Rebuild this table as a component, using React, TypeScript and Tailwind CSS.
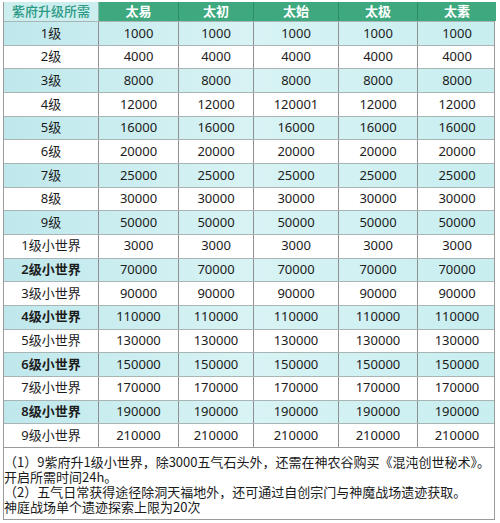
import React from "react";

const cols = ["太易", "太初", "太始", "太极", "太素"];

const rows: [string, string[]][] = [
  ["1级", ["1000", "1000", "1000", "1000", "1000"]],
  ["2级", ["4000", "4000", "4000", "4000", "4000"]],
  ["3级", ["8000", "8000", "8000", "8000", "8000"]],
  ["4级", ["12000", "12000", "120001", "12000", "12000"]],
  ["5级", ["16000", "16000", "16000", "16000", "16000"]],
  ["6级", ["20000", "20000", "20000", "20000", "20000"]],
  ["7级", ["25000", "25000", "25000", "25000", "25000"]],
  ["8级", ["30000", "30000", "30000", "30000", "30000"]],
  ["9级", ["50000", "50000", "50000", "50000", "50000"]],
  ["1级小世界", ["3000", "3000", "3000", "3000", "3000"]],
  ["2级小世界", ["70000", "70000", "70000", "70000", "70000"]],
  ["3级小世界", ["90000", "90000", "90000", "90000", "90000"]],
  ["4级小世界", ["110000", "110000", "110000", "110000", "110000"]],
  ["5级小世界", ["130000", "130000", "130000", "130000", "130000"]],
  ["6级小世界", ["150000", "150000", "150000", "150000", "150000"]],
  ["7级小世界", ["170000", "170000", "170000", "170000", "170000"]],
  ["8级小世界", ["190000", "190000", "190000", "190000", "190000"]],
  ["9级小世界", ["210000", "210000", "210000", "210000", "210000"]],
];

const font = { fontFamily: '"Noto Sans", "Noto Sans CJK SC", sans-serif' };

export default function App() {
  return (
    <div className="w-[500px] h-[523px] bg-white pt-[2px] pl-[3px]" style={font}>
      <div className="w-[492px] border-l border-r border-[#9a9a9a]">
        <div className="grid grid-cols-[95px_80px_75px_85px_79px_78px] h-[19px] text-[13px] leading-[19px]">
          <div className="bg-[#cdeeee] text-[#2a9a84] text-center font-medium border-r border-[#8fb9a8]">
            紫府升级所需
          </div>
          {cols.map((c, i) => (
            <div
              key={c}
              className={
                "bg-[#3ea97f] text-white text-center font-semibold " +
                (i < 4 ? "border-r border-[#2f8a66]" : "")
              }
            >
              {c}
            </div>
          ))}
        </div>
        {rows.map(([label, vals], r) => {
          const shaded = r % 2 === 0;
          const bold = shaded && r >= 9;
          return (
            <div
              key={label}
              className={
                "grid grid-cols-[95px_80px_75px_85px_79px_78px] h-[23.67px] border-t border-[#a9b4b4] text-[13px] text-[#1c1c1c] " +
                (shaded ? "bg-gradient-to-r from-[#bfe8ec] via-[#d8f3f4] to-[#c8eef0]" : "bg-white")
              }
            >
              <div
                className={
                  "flex items-center justify-center border-r border-[#8f8f8f] " +
                  (bold ? "font-semibold" : "")
                }
              >
                {label}
              </div>
              {vals.map((v, i) => (
                <div
                  key={i}
                  className={
                    "flex items-center justify-center " +
                    (i < 4 ? "border-r border-[#8f8f8f]" : "")
                  }
                >
                  {v}
                </div>
              ))}
            </div>
          );
        })}
        <div
          className="border-t border-b border-[#9a9a9a] h-[73px] pt-[6px] text-[13px] leading-[15px] text-[#1a1a1a]"
          style={{ fontFamily: '"Noto Sans CJK SC", "Noto Sans", sans-serif' }}
        >
          <div>（1）9紫府升1级小世界，除3000五气石头外，还需在神农谷购买《混沌创世秘术》。</div>
          <div>开启所需时间24h。</div>
          <div>（2）五气日常获得途径除洞天福地外，还可通过自创宗门与神魔战场遗迹获取。</div>
          <div>神庭战场单个遗迹探索上限为20次</div>
        </div>
      </div>
    </div>
  );
}
